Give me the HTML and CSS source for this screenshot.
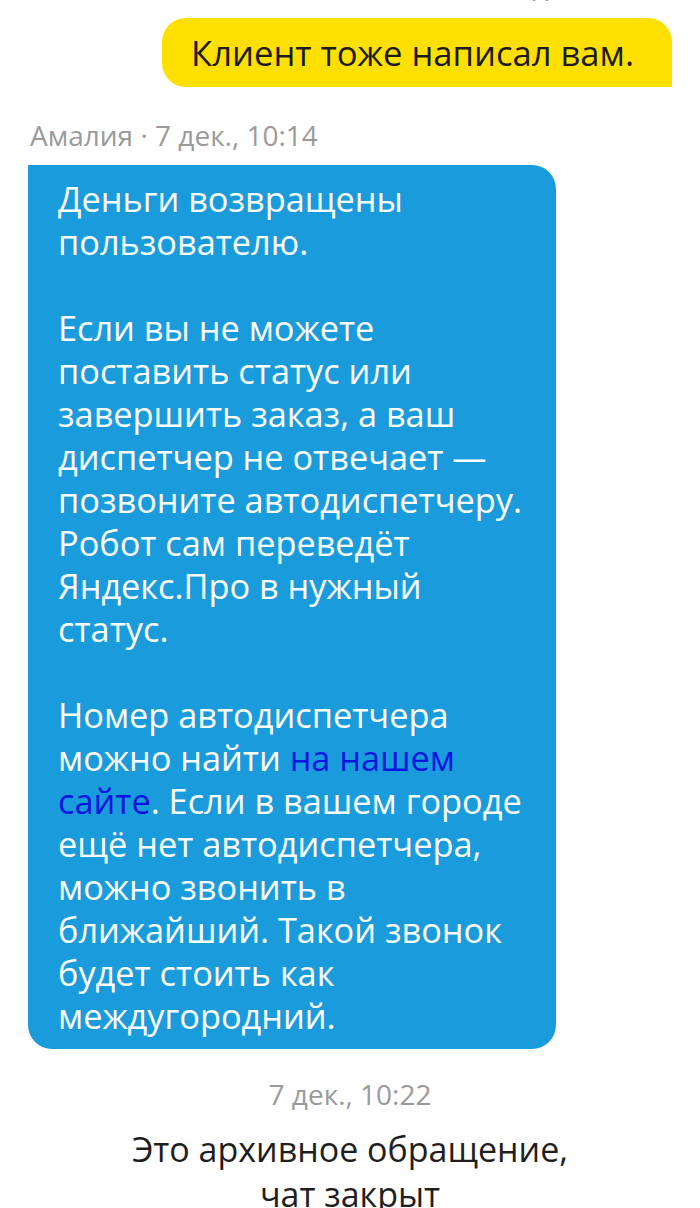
FILE: index.html
```html
<!DOCTYPE html>
<html lang="ru">
<head>
<meta charset="utf-8">
<link rel="stylesheet" href="styles.css">
</head>
<body>
<div class="chat">
  <div class="meta meta-right">7 дек., 10:13</div>
  <div class="msg-out">Клиент тоже написал вам.</div>
  <div class="meta meta-left">Амалия · 7 дек., 10:14</div>
  <div class="msg-in">
    <p>Деньги возвращены<br>пользователю.</p>
    <p>Если вы не можете<br>поставить статус или<br>завершить заказ, а ваш<br>диспетчер не отвечает —<br>позвоните автодиспетчеру.<br>Робот сам переведёт<br>Яндекс.Про в нужный<br>статус.</p>
    <p>Номер автодиспетчера<br>можно найти <a class="link" href="#">на нашем<br>сайте</a>. Если в вашем городе<br>ещё нет автодиспетчера,<br>можно звонить в<br>ближайший. Такой звонок<br>будет стоить как<br>междугородний.</p>
  </div>
  <div class="meta meta-center">7 дек., 10:22</div>
  <div class="closed">Это архивное обращение,<br>чат закрыт</div>
</div>
</body>
</html>
```
FILE: styles.css
```css
html, body {
  margin: 0;
  padding: 0;
  background: #ffffff;
}
.chat {
  display: flex;
  flex-direction: column;
  font-family: "Open Sans", "Noto Sans", sans-serif;
}
.meta {
  font-size: 28px;
  line-height: 30px;
  color: #9a9a9a;
}
.meta-right {
  align-self: flex-end;
  margin-top: -30px;
  margin-right: 28px;
}
.msg-out {
  align-self: flex-end;
  margin-top: 18px;
  margin-right: 28px;
  background: #fde000;
  color: #1b1b1b;
  font-size: 34.6px;
  line-height: 40px;
  padding: 15px 38px 14px 29px;
  border-radius: 24px 24px 0 24px;
}
.meta-left {
  margin: 33px 0 0 30px;
}
.msg-in {
  align-self: flex-start;
  margin: 15px 0 0 28px;
  width: 528px;
  box-sizing: border-box;
  background: #1a9cdc;
  color: #ffffff;
  font-size: 34.3px;
  line-height: 43px;
  padding: 12px 10px 12px 30px;
  border-radius: 0 24px 24px 24px;
  white-space: nowrap;
}
.msg-in p {
  margin: 0 0 43px 0;
}
.msg-in p:last-child {
  margin-bottom: 0;
}
.link {
  color: #0a14e0;
  text-decoration: none;
}
.meta-center {
  align-self: center;
  margin-top: 30px;
}
.closed {
  margin-top: 18px;
  text-align: center;
  font-size: 34px;
  line-height: 45px;
  color: #1e1e1e;
}
```
